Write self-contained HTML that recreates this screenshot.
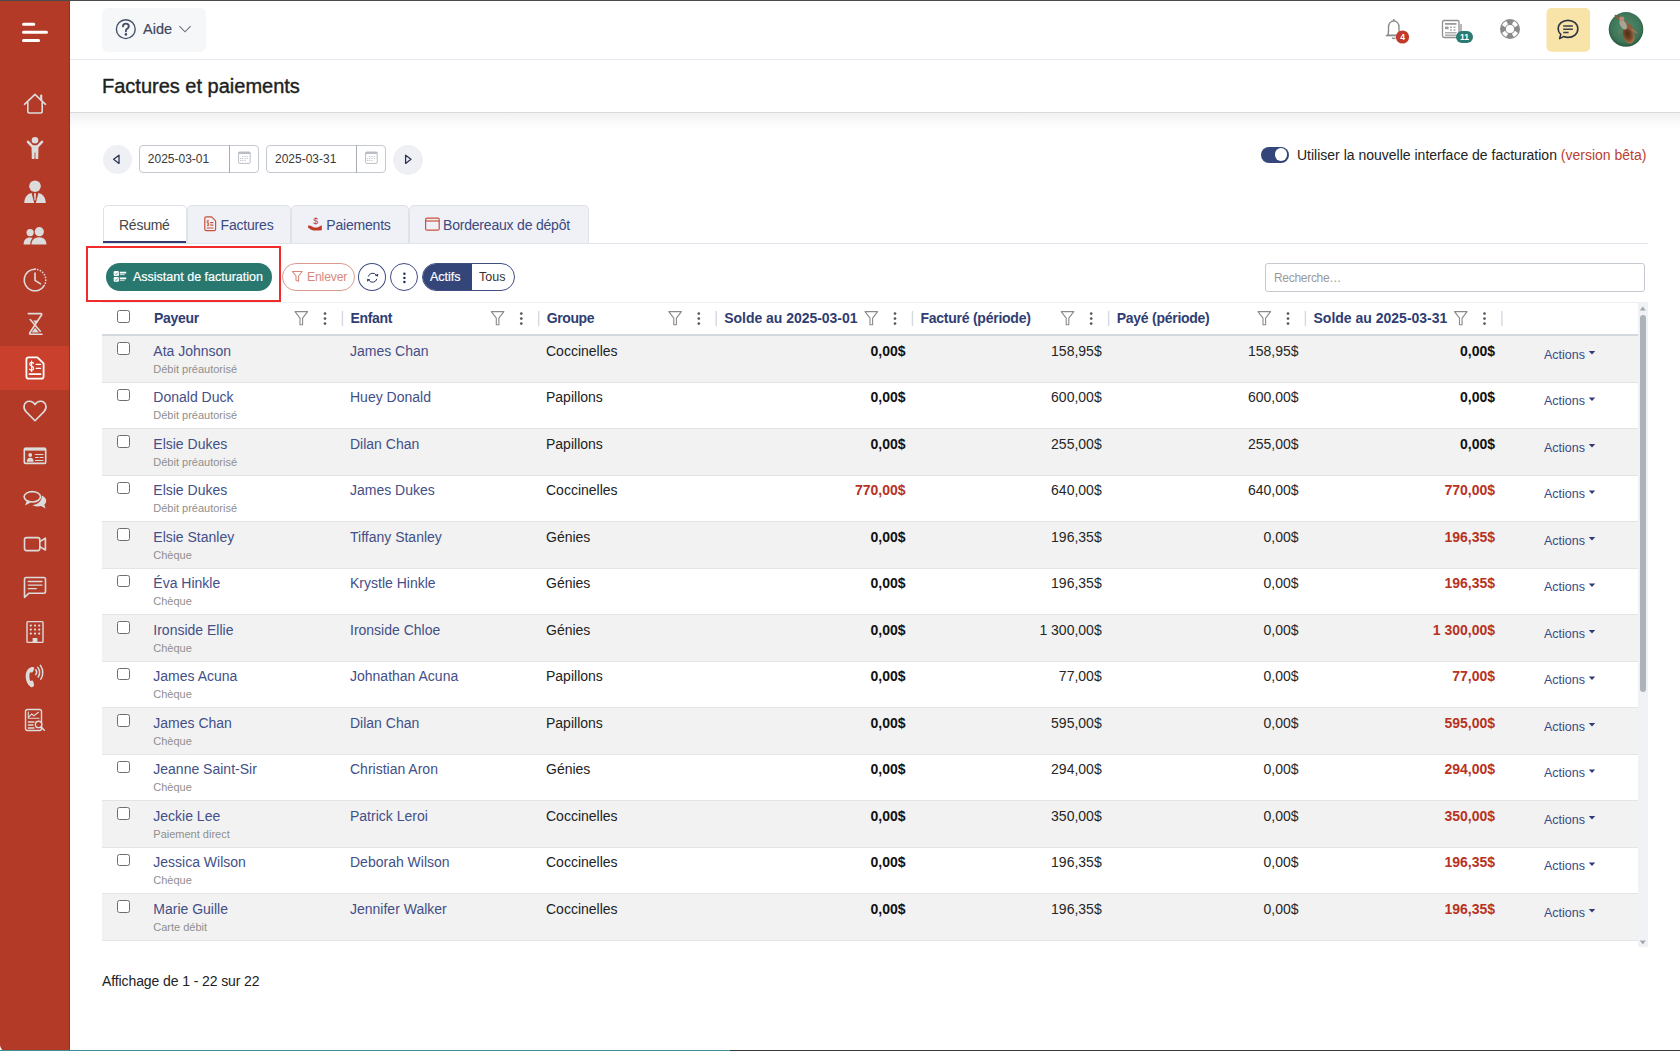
<!DOCTYPE html>
<html><head><meta charset="utf-8"><title>Factures et paiements</title>
<style>
*{box-sizing:border-box;margin:0;padding:0}
html,body{width:1680px;height:1051px;overflow:hidden;background:#fff;font-family:"Liberation Sans",sans-serif;color:#222}
.a{position:absolute}
.nw{white-space:nowrap;line-height:1.15}
svg.a{overflow:visible}
#topline{left:0;top:0;width:1680px;height:1px;background:#4a4a4a;z-index:50}
#botline{left:0;top:1050px;width:1680px;height:1px;background:linear-gradient(90deg,#3f8e98 0,#3f8e98 730px,#3a3a3a 730px);z-index:50}
#side{left:0;top:0;width:70px;height:1051px;background:#b33a27;border-bottom-left-radius:6px}
#hdr{left:70px;top:0;width:1610px;height:60px;background:#fff;border-bottom:1px solid #e6e8ef}
#aide{left:102px;top:8px;width:104px;height:44px;background:#f6f7f9;border-radius:6px}
#titlebar{left:70px;top:60px;width:1610px;height:53px;background:#fff;border-bottom:1px solid #dadbdd}
#shadow{left:70px;top:113px;width:1610px;height:17px;background:linear-gradient(#f1f1f1,#fbfbfb 60%,#fff)}
.title{left:102px;font-size:20px;color:#1d1f23;-webkit-text-stroke:0.4px #1d1f23}
.circ{border-radius:50%;background:#eef0f5}
.dinput{height:28px;border:1px solid #c5c9d0;border-radius:4px;background:#fff}
.dtext{font-size:12px;color:#383838}
.tab{top:205px;height:38px;background:#eff1f6;border:1px solid #dfe2e9;border-bottom:none;border-radius:5px 5px 0 0}
.tabt{font-size:14px;color:#3b4a80;top:217px}
.hcell{font-size:14px;font-weight:bold;color:#2f3d73}
.cell{font-size:14px}
.name{color:#434f87}
.sub{font-size:11px;color:#8f8f8f}
.num{text-align:right;width:200px}
.cb{width:12.6px;height:12.6px;border:1.4px solid #6e6e6e;border-radius:2.5px;background:#fff}
.act{font-size:12.5px;color:#3a4a84}
</style></head>
<body>
<div id="topline" class="a"></div>
<div id="botline" class="a"></div>
<div id="side" class="a">
<div class="a" style="left:0;top:346px;width:70px;height:44px;background:#c9402c"></div>
<div class="a" style="left:69.2px;top:0;width:0.8px;height:1051px;background:#b8240f"></div>
<svg class="a" style="left:0;top:0" width="70" height="1051" viewBox="0 0 70 1051"><g stroke="#fff" stroke-width="3" stroke-linecap="round"><path d="M23.5 24.3H33.8M23.5 32.3H46.5M23.5 40.4H38.6"/></g><g fill="none" stroke="#dcdcdc" stroke-width="1.6" stroke-linecap="round" stroke-linejoin="round"><path d="M24.5 104.3L35 94.3L45.5 104.3"/><path d="M27.8 102.5V111.3Q27.8 113 29.5 113H40.5Q42.2 113 42.2 111.3V102.5"/><path d="M41.2 95.5V100" stroke-width="2.2"/><path d="M35 269.2A10.8 10.8 0 1 0 44.35 285.4"/><path d="M35 269.2A10.8 10.8 0 0 1 44.35 285.4" stroke-dasharray="0.1 2.7" stroke-width="1.7"/><path d="M35 273V280.3L40.5 283.8"/><path d="M28.3 313.6H40.8Q42.3 313.6 41.5 315L30 332.5Q29 334.2 30.5 334.2H42"/><path d="M30.2 319.5L40.3 331.2"/><path d="M35 420.8L26 411.6C22.3 407.8 24 401.6 29.2 401.3C32 401.1 33.9 402.8 35 404.6C36.1 402.8 38 401.1 40.8 401.3C46 401.6 47.7 407.8 44 411.6Z"/><rect x="24.3" y="448.2" width="21.4" height="15.2" rx="1.2"/><path d="M35.5 454.5H43M35.5 457.5H38.3M40 457.5H43M35.5 460.5H43" stroke-width="1.1"/><ellipse cx="32.3" cy="496.8" rx="8.2" ry="5.2"/><rect x="24.5" y="537.6" width="15.3" height="13" rx="2"/><path d="M39.8 541.6L45.4 538.2V550L39.8 546.6"/><path d="M24.5 597.3V579.2Q24.5 577.5 26.2 577.5H43.8Q45.5 577.5 45.5 579.2V591.5Q45.5 593.2 43.8 593.2H29Z"/><path d="M28.3 581.5H42M28.3 585.1H42M28.3 588.7H36.3" stroke-width="1.3"/><rect x="27" y="621.6" width="16" height="20.8" rx="0.8" stroke-width="1.4"/><path d="M35.8 669.8Q37.6 672.2 35.8 674.6M37.8 667.4Q41.3 672.2 38.2 677M40.4 665.3Q45 672.2 40.8 679.2" stroke-width="1.5"/><rect x="25.5" y="709.5" width="16" height="21" rx="2" stroke-width="1.4"/><path d="M28.3 712V718.3H39" stroke-width="1.1"/><path d="M28.8 716.8L31.8 713.8L33.8 715.8L38.5 712.3" stroke-width="1.1"/><path d="M28.3 722H34M28.3 725H33M28.3 728H34" stroke-width="1.3"/></g><circle cx="38.6" cy="724.4" r="3.2" fill="#b33a27" stroke="#dcdcdc" stroke-width="1.4"/><path d="M40.9 726.7L44.3 730.2" stroke="#dcdcdc" stroke-width="1.6" stroke-linecap="round"/><g fill="#dcdcdc"><circle cx="35" cy="140.2" r="3.3"/><path d="M28 141.8L32.3 146.3M42 141.8L37.7 146.3" stroke="#dcdcdc" stroke-width="2.6" stroke-linecap="round"/><path d="M31.6 145.2H38.4V152.5H38.3V158.2Q38.3 159 37.5 159H36.1Q35.4 159 35.4 158.2V152.5H34.6V158.2Q34.6 159 33.9 159H32.5Q31.7 159 31.7 158.2V152.5H31.6Z"/><circle cx="35" cy="186.2" r="5.8"/><path d="M24.2 203C24.4 197.2 27.3 193.6 31.6 192.9L34.2 203Z"/><path d="M45.8 203C45.6 197.2 42.7 193.6 38.4 192.9L35.8 203Z"/><path d="M34 193.2H36L35.6 199.5L35 201L34.4 199.5Z"/><circle cx="30.1" cy="232.6" r="3.6"/><circle cx="39.3" cy="231.7" r="4.6"/><path d="M23.6 244.6C23.6 240.2 26.2 237.6 30.1 237.6C31.2 237.6 32 237.8 32.7 238.1C31 239.8 30.2 242 30.2 244.6Z"/><path d="M31.4 244.6C31.4 240.2 34.5 237.2 39.2 237.2C43.9 237.2 46.4 240.2 46.4 244.6Z"/><path d="M31.6 332.6L35.2 327.8L38.8 332.6Z"/><path d="M33.2 320.5H37.8L35.5 323.5Z"/><rect x="24.3" y="447.8" width="21.4" height="2.8"/><circle cx="30.2" cy="455" r="1.9"/><path d="M26.8 461.7Q26.8 457.8 30.2 457.8Q33.6 457.8 33.6 461.7Z"/><path d="M26.8 501L25 505.5L30.6 502.4Z"/><path d="M41.8 495.5C46 497 48 501.8 44.3 504.8L45.6 508.6L41 506C38.3 506.8 35 506.4 32.4 505.2C37.3 504.6 42 501.8 41.8 495.5Z"/><circle cx="30.8" cy="625.6" r="1.15"/><circle cx="35" cy="625.6" r="1.15"/><circle cx="39.2" cy="625.6" r="1.15"/><circle cx="30.8" cy="629.6" r="1.15"/><circle cx="35" cy="629.6" r="1.15"/><circle cx="39.2" cy="629.6" r="1.15"/><circle cx="30.8" cy="633.6" r="1.15"/><circle cx="35" cy="633.6" r="1.15"/><circle cx="39.2" cy="633.6" r="1.15"/><rect x="32.6" y="638" width="4.8" height="4.4"/><path d="M31.2 667.2C27.8 668.2 25.7 671.6 25.7 676.2C25.7 681.2 28.2 685.6 31.4 687.2C32.3 687.5 33.6 686.6 34 685.5C34.3 684.6 33.4 681.6 32.7 680.8C32.2 680.3 30.9 680.7 30.2 681C29.2 678.8 29.1 674.4 30 672.2C30.7 672.4 31.9 672.6 32.4 672.2C33.2 671.5 34.3 669 34.2 668C34.1 667.2 32.2 666.9 31.2 667.2Z"/></g><g fill="none" stroke="#fff" stroke-width="1.8" stroke-linejoin="round" stroke-linecap="round"><path d="M28.6 357.4H37.4L43.6 363.4V376.4Q43.6 378.6 41.4 378.6H28.6Q26.4 378.6 26.4 376.4V359.6Q26.4 357.4 28.6 357.4Z"/><path d="M36.2 364.4H40.6M36.2 368.3H40.6" stroke-width="1.3"/><path d="M29.4 374.1H40.6" stroke-width="1.8"/><path d="M33.5 363.3Q33 362.4 31.6 362.4Q29.8 362.4 29.8 364Q29.8 365.5 31.6 366.1Q33.6 366.7 33.6 368.5Q33.6 370.2 31.6 370.2Q30.1 370.2 29.6 369.2M31.6 361.2V371.4" stroke-width="1.2"/></g></svg>
</div>
<div id="hdr" class="a"></div>
<div id="aide" class="a"></div>
<svg class="a" style="left:110px;top:14px" width="100" height="32" viewBox="110 14 100 32"><circle cx="125.8" cy="29.2" r="9.4" fill="none" stroke="#44506a" stroke-width="1.4"/><path d="M123 26.4Q123 23.6 125.9 23.6Q128.8 23.6 128.8 26.3Q128.8 27.9 127 28.9Q125.9 29.5 125.9 30.9V31.4" fill="none" stroke="#44506a" stroke-width="1.9" stroke-linecap="round"/><circle cx="125.9" cy="34.4" r="1.3" fill="#44506a"/><path d="M179.4 26.2L185 31.8L190.6 26.2" fill="none" stroke="#6a7080" stroke-width="1.1"/></svg>
<div class="a nw" style="left:143px;top:20.5px;font-size:14.5px;color:#3d4860;-webkit-text-stroke:0.2px #3d4860">Aide</div>
<svg class="a" style="left:1370px;top:0" width="310" height="60" viewBox="1370 0 310 60"><g fill="none" stroke="#8a8a8a" stroke-width="1.4" stroke-linejoin="round"><path d="M1387.6 35.2C1388.8 33.6 1388.5 31 1388.5 27.5C1388.5 23.6 1390.8 21 1393.8 21C1396.8 21 1399 23.6 1399 27.5C1399 31 1398.8 33.6 1400 35.2Z"/><path d="M1385.8 35.6H1401.6"/><path d="M1392 37.8Q1393.8 39.2 1395.6 37.8"/></g><circle cx="1393.8" cy="20" r="1" fill="#8a8a8a"/><circle cx="1402.5" cy="37" r="6.6" fill="#c0392b"/><text x="1402.5" y="40" font-family="Liberation Sans" font-weight="bold" font-size="8.5" fill="#fff" text-anchor="middle">4</text><g fill="none" stroke="#8f8f8f" stroke-width="1.3"><rect x="1442.5" y="20.5" width="16.5" height="17" rx="1.8"/><path d="M1461 24V36"/></g><g fill="#9a9a9a"><rect x="1445" y="23" width="11.5" height="1.8"/><rect x="1445" y="26.6" width="3.6" height="2.6"/><rect x="1450" y="26.6" width="2" height="1.2"/><rect x="1453.5" y="26.6" width="2" height="1.2"/><rect x="1450" y="29.4" width="2" height="1.2"/><rect x="1453.5" y="29.4" width="2" height="1.2"/><rect x="1445" y="32.2" width="11.5" height="1.2"/><rect x="1445" y="34.6" width="11.5" height="1.2"/></g><rect x="1456" y="31" width="17" height="12" rx="6" fill="#2a7b72"/><text x="1464.5" y="40.2" font-family="Liberation Sans" font-weight="bold" font-size="8.5" fill="#fff" text-anchor="middle">11</text><circle cx="1510.0" cy="29.0" r="10" fill="#8a8a8a"/><circle cx="1510.0" cy="29.0" r="4.1" fill="#fff"/><path d="M1514.85 30.86A5.2 5.2 0 0 1 1511.86 33.85L1513.90 37.00A8.9 8.9 0 0 0 1518.00 32.90Z" fill="#fff"/><path d="M1508.14 33.85A5.2 5.2 0 0 1 1505.15 30.86L1502.00 32.90A8.9 8.9 0 0 0 1506.10 37.00Z" fill="#fff"/><path d="M1505.15 27.14A5.2 5.2 0 0 1 1508.14 24.15L1506.10 21.00A8.9 8.9 0 0 0 1502.00 25.10Z" fill="#fff"/><path d="M1511.86 24.15A5.2 5.2 0 0 1 1514.85 27.14L1518.00 25.10A8.9 8.9 0 0 0 1513.90 21.00Z" fill="#fff"/><rect x="1546.5" y="8" width="43.6" height="43.8" rx="5" fill="#f8e4a8"/><path d="M1559.6 38.6L1560.8 34.4C1558.9 32.8 1558.2 31 1558.2 28.9C1558.2 23.8 1562.6 20.4 1568 20.4C1573.4 20.4 1577.8 23.8 1577.8 28.9C1577.8 34 1573.4 37.4 1568 37.4C1566.2 37.4 1564.8 37.1 1563.6 36.6Z" fill="none" stroke="#2f3442" stroke-width="1.6" stroke-linejoin="round"/><path d="M1563.2 26H1572.8M1563.2 29.2H1572.8M1563.2 32.4H1568.6" stroke="#3a3f4c" stroke-width="1.5"/><defs><radialGradient id="av" cx="0.5" cy="0.45" r="0.55"><stop offset="0" stop-color="#4f8a6a"/><stop offset="0.75" stop-color="#3f765a"/><stop offset="1" stop-color="#2a5a40"/></radialGradient><radialGradient id="tl" cx="0.45" cy="0.4" r="0.6"><stop offset="0" stop-color="#4a2c18"/><stop offset="0.6" stop-color="#7a4a2a"/><stop offset="1" stop-color="#b07845"/></radialGradient></defs><circle cx="1626" cy="29.4" r="17.3" fill="url(#av)"/><ellipse cx="1628.6" cy="35.2" rx="5.6" ry="8.6" transform="rotate(-18 1628.6 35.2)" fill="url(#tl)"/><path d="M1622 21L1615.6 15.8" stroke="#8a5a3a" stroke-width="2.2" stroke-linecap="round"/><path d="M1625.5 24L1627.6 20" stroke="#8a6040" stroke-width="1.6" stroke-linecap="round"/><ellipse cx="1629.4" cy="26.8" rx="2.4" ry="4" transform="rotate(-50 1629.4 26.8)" fill="#8a5d3c"/><path d="M1632 29.5L1636.4 32.6" stroke="#a07658" stroke-width="1.6" stroke-linecap="round"/><ellipse cx="1623.2" cy="24.6" rx="3" ry="5.4" transform="rotate(-32 1623.2 24.6)" fill="#a8a394"/><ellipse cx="1621.8" cy="18.8" rx="2.6" ry="2.3" fill="#b88a74"/><path d="M1620 31L1619.2 34.2" stroke="#9a6a48" stroke-width="1.4" stroke-linecap="round"/></svg>
<div id="titlebar" class="a"></div>
<div id="shadow" class="a"></div>
<div class="a nw title" style="top:74.6px">Factures et paiements</div>
<div class="a circ" style="left:102.5px;top:144.8px;width:29.4px;height:29.4px"></div>
<div class="a circ" style="left:393px;top:144.6px;width:30px;height:30px"></div>
<svg class="a" style="left:100px;top:140px" width="330" height="40" viewBox="100 140 330 40"><path d="M119 155.2V163.4L113.6 159.3Z" fill="none" stroke="#2c3550" stroke-width="1.3" stroke-linejoin="round"/><path d="M405.6 155.2V163.4L411 159.3Z" fill="none" stroke="#2c3550" stroke-width="1.3" stroke-linejoin="round"/></svg>
<div class="a dinput" style="left:139px;top:145px;width:119.5px"></div>
<div class="a" style="left:229px;top:145px;width:1px;height:28px;background:#a8adb5"></div>
<div class="a nw dtext" style="left:147.8px;top:152.5px">2025-03-01</div>
<svg class="a" style="left:238px;top:151px" width="13" height="13" viewBox="0 0 13 13"><rect x="0.6" y="1" width="11.6" height="11.4" rx="1" fill="none" stroke="#b9bdc5" stroke-width="1"/><rect x="0.6" y="1" width="11.6" height="2" fill="#b9bdc5"/><g fill="#c4c8cf"><rect x="4" y="5" width="1.3" height="1"/><rect x="6.3" y="5" width="1.3" height="1"/><rect x="8.6" y="5" width="1.3" height="1"/><rect x="2" y="7" width="1.3" height="1"/><rect x="4" y="7" width="1.3" height="1"/><rect x="6.3" y="7" width="1.3" height="1"/><rect x="8.6" y="7" width="1.3" height="1"/><rect x="2" y="9" width="1.3" height="1"/><rect x="4" y="9" width="1.3" height="1"/><rect x="6.3" y="9" width="1.3" height="1"/></g></svg>
<div class="a dinput" style="left:266.2px;top:145px;width:119.5px"></div>
<div class="a" style="left:356.2px;top:145px;width:1px;height:28px;background:#a8adb5"></div>
<div class="a nw dtext" style="left:275.0px;top:152.5px">2025-03-31</div>
<svg class="a" style="left:365.2px;top:151px" width="13" height="13" viewBox="0 0 13 13"><rect x="0.6" y="1" width="11.6" height="11.4" rx="1" fill="none" stroke="#b9bdc5" stroke-width="1"/><rect x="0.6" y="1" width="11.6" height="2" fill="#b9bdc5"/><g fill="#c4c8cf"><rect x="4" y="5" width="1.3" height="1"/><rect x="6.3" y="5" width="1.3" height="1"/><rect x="8.6" y="5" width="1.3" height="1"/><rect x="2" y="7" width="1.3" height="1"/><rect x="4" y="7" width="1.3" height="1"/><rect x="6.3" y="7" width="1.3" height="1"/><rect x="8.6" y="7" width="1.3" height="1"/><rect x="2" y="9" width="1.3" height="1"/><rect x="4" y="9" width="1.3" height="1"/><rect x="6.3" y="9" width="1.3" height="1"/></g></svg>
<div class="a" style="left:1261px;top:147px;width:28px;height:16px;border-radius:8px;background:#34467a"></div>
<div class="a" style="left:1275px;top:148.4px;width:12.4px;height:12.4px;border-radius:50%;background:#fff"></div>
<div class="a nw" style="left:1297px;top:146.5px;font-size:14px;color:#222">Utiliser la nouvelle interface de facturation <span style="color:#b9412f">(version bêta)</span></div>
<div class="a" style="left:102px;top:243px;width:1546px;height:1px;background:#e1e4eb"></div>
<div class="a tab" style="left:102.5px;width:84px;background:#fff"></div>
<div class="a nw tabt" style="left:119px;color:#454545;letter-spacing:-0.25px">Résumé</div>
<div class="a" style="left:102.5px;top:240.5px;width:83.5px;height:2.5px;background:#2f3d73"></div>
<div class="a tab" style="left:186.5px;width:104.5px"></div>
<div class="a tab" style="left:291px;width:117.5px"></div>
<div class="a tab" style="left:408.5px;width:180.5px"></div>
<div class="a nw tabt" style="left:220.6px;letter-spacing:-0.2px">Factures</div>
<div class="a nw tabt" style="left:326.3px;letter-spacing:-0.2px">Paiements</div>
<div class="a nw tabt" style="left:443px;letter-spacing:-0.2px">Bordereaux de dépôt</div>
<svg class="a" style="left:200px;top:212px" width="250" height="24" viewBox="200 212 250 24"><g fill="none" stroke="#c8513e" stroke-width="1.2" stroke-linejoin="round"><path d="M206.2 216.8H211.6L215.6 220.8V229.2Q215.6 230.6 214.2 230.6H206.2Q204.8 230.6 204.8 229.2V218.2Q204.8 216.8 206.2 216.8Z"/><path d="M210.2 222.6H213.4M210.2 225.2H213.4M206.8 228H213.6"/><path d="M208.4 220.6Q207 220.6 207 221.8Q207 222.8 208 223.1Q208.9 223.4 208.9 224.4Q208.9 225.6 207.2 225.6M208 219.8V226.4" stroke-width="0.9"/><rect x="425.6" y="218.2" width="13.6" height="12" rx="1.5"/><path d="M425.6 221H439.2"/></g><text x="315.8" y="223.5" font-family="Liberation Sans" font-size="9" fill="#c0392b" text-anchor="middle">$</text><path d="M308 225.8Q309.5 224.8 311.5 226.2L314 227.6H317.5L321.8 225.3V230.2L318.5 230.6H313.5Q310.5 230 308 227.6Z" fill="#c0392b"/></svg>
<div class="a" style="left:86.3px;top:245.5px;width:195px;height:56.5px;border:2px solid #f02b2b"></div>
<div class="a" style="left:105.5px;top:263px;width:166.5px;height:28px;border-radius:14px;background:#287870"></div>
<svg class="a" style="left:112px;top:269px" width="16" height="15" viewBox="112 269 16 15"><g fill="#fff"><rect x="113.7" y="271.1" width="5.2" height="4.8" rx="1.2"/><rect x="113.7" y="277" width="5.2" height="4.8" rx="1.2"/></g><path d="M114.9 273.6L115.9 274.6L117.6 272.6M114.9 279.5L115.9 280.5L117.6 278.5" fill="none" stroke="#287870" stroke-width="0.7"/><g stroke="#fff" stroke-width="1.8"><path d="M119.8 272.7H126.2M119.8 278.4H126.2"/></g><g stroke="#cfe3df" stroke-width="1"><path d="M119.8 274.6H124.6M119.8 280.3H124.6"/></g></svg>
<div class="a nw" style="left:133px;top:270.3px;font-size:12.5px;color:#fff;-webkit-text-stroke:0.2px #fff">Assistant de facturation</div>
<div class="a" style="left:282.4px;top:263.2px;width:72.6px;height:27.5px;border-radius:14px;border:1px solid #dc9a8e"></div>
<svg class="a" style="left:290px;top:269px" width="15" height="15" viewBox="290 269 15 15"><path d="M292.4 271.5H302.2L298.6 276V281.2L296 280.2V276Z" fill="none" stroke="#d6897b" stroke-width="1.1" stroke-linejoin="round"/></svg>
<div class="a nw" style="left:307px;top:270.3px;font-size:12.2px;color:#d6897b;letter-spacing:-0.15px">Enlever</div>
<div class="a" style="left:358px;top:263.2px;width:28.3px;height:28px;border-radius:50%;border:1.2px solid #3f4d80"></div>
<div class="a" style="left:390.3px;top:263.2px;width:28px;height:28px;border-radius:50%;border:1.2px solid #3f4d80"></div>
<svg class="a" style="left:360px;top:265px" width="60" height="26" viewBox="360 265 60 26"><path d="M368.3 276.6A4.5 4.5 0 0 1 376.4 275.2M376.9 278.8A4.5 4.5 0 0 1 368.8 280.2" fill="none" stroke="#2e3a6a" stroke-width="1"/><path d="M374.8 275.8L378 276.6L378.2 273.6Z M370.4 279.6L367.2 278.8L367 281.8Z" fill="#2e3a6a"/><g fill="#1f2a5a"><circle cx="404.4" cy="273.8" r="1.2"/><circle cx="404.4" cy="277.9" r="1.2"/><circle cx="404.4" cy="282" r="1.2"/></g></svg>
<div class="a" style="left:421.6px;top:263.2px;width:93px;height:28px;border-radius:14px;border:1.2px solid #3f4d80;overflow:hidden"><div style="width:49.4px;height:28px;background:#34457a"></div></div>
<div class="a nw" style="left:430px;top:270.3px;font-size:12.5px;color:#fff;-webkit-text-stroke:0.2px #fff">Actifs</div>
<div class="a nw" style="left:479px;top:270.3px;font-size:12.5px;color:#333">Tous</div>
<div class="a" style="left:1265px;top:263px;width:380px;height:28.6px;border:1px solid #c5c9d0;border-radius:3px"></div>
<div class="a nw" style="left:1274px;top:271.5px;font-size:12px;color:#9a9a9a;letter-spacing:-0.3px">Recherche…</div>
<div class="a" style="left:102px;top:302px;width:1536px;height:1px;background:#eceef2"></div>
<div class="a" style="left:102px;top:334px;width:1536px;height:2px;background:#d3d7de"></div>
<div class="a cb" style="left:117.2px;top:310px"></div>
<div class="a nw hcell" style="left:154.0px;top:310px;letter-spacing:-0.3px">Payeur</div>
<div class="a nw hcell" style="left:350.5px;top:310px;letter-spacing:-0.35px">Enfant</div>
<div class="a nw hcell" style="left:546.8px;top:310px;letter-spacing:-0.43px">Groupe</div>
<div class="a nw hcell" style="left:724.3px;top:310px;letter-spacing:-0.04px">Solde au 2025-03-01</div>
<div class="a nw hcell" style="left:920.5px;top:310px;letter-spacing:-0.25px">Facturé (période)</div>
<div class="a nw hcell" style="left:1116.7px;top:310px;letter-spacing:-0.26px">Payé (période)</div>
<div class="a nw hcell" style="left:1313.5px;top:310px;letter-spacing:0px">Solde au 2025-03-31</div>
<svg class="a" style="left:100px;top:305px" width="1420" height="26" viewBox="100 305 1420 26"><path d="M295.0 311.6H307.6L302.6 318.2V324.8L300.0 324.8V318.2Z" fill="none" stroke="#8a8a8a" stroke-width="1.1" stroke-linejoin="round"/><g fill="#5a5a5a"><circle cx="325.0" cy="313.6" r="1.35"/><circle cx="325.0" cy="318.6" r="1.35"/><circle cx="325.0" cy="323.6" r="1.35"/></g><rect x="341.7" y="311" width="1.4" height="15" fill="#d5d9e0"/><path d="M491.3 311.6H503.9L498.9 318.2V324.8L496.3 324.8V318.2Z" fill="none" stroke="#8a8a8a" stroke-width="1.1" stroke-linejoin="round"/><g fill="#5a5a5a"><circle cx="521.3" cy="313.6" r="1.35"/><circle cx="521.3" cy="318.6" r="1.35"/><circle cx="521.3" cy="323.6" r="1.35"/></g><rect x="538.0" y="311" width="1.4" height="15" fill="#d5d9e0"/><path d="M668.8 311.6H681.4L676.4 318.2V324.8L673.8 324.8V318.2Z" fill="none" stroke="#8a8a8a" stroke-width="1.1" stroke-linejoin="round"/><g fill="#5a5a5a"><circle cx="698.8" cy="313.6" r="1.35"/><circle cx="698.8" cy="318.6" r="1.35"/><circle cx="698.8" cy="323.6" r="1.35"/></g><rect x="715.5" y="311" width="1.4" height="15" fill="#d5d9e0"/><path d="M865.0 311.6H877.6L872.6 318.2V324.8L870.0 324.8V318.2Z" fill="none" stroke="#8a8a8a" stroke-width="1.1" stroke-linejoin="round"/><g fill="#5a5a5a"><circle cx="895.0" cy="313.6" r="1.35"/><circle cx="895.0" cy="318.6" r="1.35"/><circle cx="895.0" cy="323.6" r="1.35"/></g><rect x="911.7" y="311" width="1.4" height="15" fill="#d5d9e0"/><path d="M1061.2 311.6H1073.8L1068.8 318.2V324.8L1066.2 324.8V318.2Z" fill="none" stroke="#8a8a8a" stroke-width="1.1" stroke-linejoin="round"/><g fill="#5a5a5a"><circle cx="1091.2" cy="313.6" r="1.35"/><circle cx="1091.2" cy="318.6" r="1.35"/><circle cx="1091.2" cy="323.6" r="1.35"/></g><rect x="1107.9" y="311" width="1.4" height="15" fill="#d5d9e0"/><path d="M1258.0 311.6H1270.6L1265.6 318.2V324.8L1263.0 324.8V318.2Z" fill="none" stroke="#8a8a8a" stroke-width="1.1" stroke-linejoin="round"/><g fill="#5a5a5a"><circle cx="1288.0" cy="313.6" r="1.35"/><circle cx="1288.0" cy="318.6" r="1.35"/><circle cx="1288.0" cy="323.6" r="1.35"/></g><rect x="1304.7" y="311" width="1.4" height="15" fill="#d5d9e0"/><path d="M1454.5 311.6H1467.1L1462.1 318.2V324.8L1459.5 324.8V318.2Z" fill="none" stroke="#8a8a8a" stroke-width="1.1" stroke-linejoin="round"/><g fill="#5a5a5a"><circle cx="1484.5" cy="313.6" r="1.35"/><circle cx="1484.5" cy="318.6" r="1.35"/><circle cx="1484.5" cy="323.6" r="1.35"/></g><rect x="1501.2" y="311" width="1.4" height="15" fill="#d5d9e0"/></svg>
<div class="a" style="left:102px;top:336.0px;width:1536px;height:46.5px;background:#f2f2f2;border-bottom:1px solid #e2e4e8"></div>
<div class="a cb" style="left:117.3px;top:342.2px"></div>
<div class="a nw cell name" style="left:153.3px;top:342.7px">Ata Johnson</div>
<div class="a nw sub" style="left:153.3px;top:362.6px">Débit préautorisé</div>
<div class="a nw cell name" style="left:350px;top:342.7px">James Chan</div>
<div class="a nw cell" style="left:546px;top:342.7px;color:#222">Coccinelles</div>
<div class="a nw cell num" style="left:705.5px;top:342.7px;font-weight:bold;color:#111">0,00$</div>
<div class="a nw cell num" style="left:901.7px;top:342.7px;color:#262626">158,95$</div>
<div class="a nw cell num" style="left:1098.5px;top:342.7px;color:#262626">158,95$</div>
<div class="a nw cell num" style="left:1295.0px;top:342.7px;font-weight:bold;color:#111">0,00$</div>
<div class="a nw act" style="left:1544px;top:347.6px">Actions</div>
<div class="a" style="left:102px;top:382.5px;width:1536px;height:46.5px;background:#fff;border-bottom:1px solid #e2e4e8"></div>
<div class="a cb" style="left:117.3px;top:388.7px"></div>
<div class="a nw cell name" style="left:153.3px;top:389.2px">Donald Duck</div>
<div class="a nw sub" style="left:153.3px;top:409.1px">Débit préautorisé</div>
<div class="a nw cell name" style="left:350px;top:389.2px">Huey Donald</div>
<div class="a nw cell" style="left:546px;top:389.2px;color:#222">Papillons</div>
<div class="a nw cell num" style="left:705.5px;top:389.2px;font-weight:bold;color:#111">0,00$</div>
<div class="a nw cell num" style="left:901.7px;top:389.2px;color:#262626">600,00$</div>
<div class="a nw cell num" style="left:1098.5px;top:389.2px;color:#262626">600,00$</div>
<div class="a nw cell num" style="left:1295.0px;top:389.2px;font-weight:bold;color:#111">0,00$</div>
<div class="a nw act" style="left:1544px;top:394.1px">Actions</div>
<div class="a" style="left:102px;top:429.0px;width:1536px;height:46.5px;background:#f2f2f2;border-bottom:1px solid #e2e4e8"></div>
<div class="a cb" style="left:117.3px;top:435.2px"></div>
<div class="a nw cell name" style="left:153.3px;top:435.7px">Elsie Dukes</div>
<div class="a nw sub" style="left:153.3px;top:455.6px">Débit préautorisé</div>
<div class="a nw cell name" style="left:350px;top:435.7px">Dilan Chan</div>
<div class="a nw cell" style="left:546px;top:435.7px;color:#222">Papillons</div>
<div class="a nw cell num" style="left:705.5px;top:435.7px;font-weight:bold;color:#111">0,00$</div>
<div class="a nw cell num" style="left:901.7px;top:435.7px;color:#262626">255,00$</div>
<div class="a nw cell num" style="left:1098.5px;top:435.7px;color:#262626">255,00$</div>
<div class="a nw cell num" style="left:1295.0px;top:435.7px;font-weight:bold;color:#111">0,00$</div>
<div class="a nw act" style="left:1544px;top:440.6px">Actions</div>
<div class="a" style="left:102px;top:475.5px;width:1536px;height:46.5px;background:#fff;border-bottom:1px solid #e2e4e8"></div>
<div class="a cb" style="left:117.3px;top:481.7px"></div>
<div class="a nw cell name" style="left:153.3px;top:482.2px">Elsie Dukes</div>
<div class="a nw sub" style="left:153.3px;top:502.1px">Débit préautorisé</div>
<div class="a nw cell name" style="left:350px;top:482.2px">James Dukes</div>
<div class="a nw cell" style="left:546px;top:482.2px;color:#222">Coccinelles</div>
<div class="a nw cell num" style="left:705.5px;top:482.2px;font-weight:bold;color:#b7321f">770,00$</div>
<div class="a nw cell num" style="left:901.7px;top:482.2px;color:#262626">640,00$</div>
<div class="a nw cell num" style="left:1098.5px;top:482.2px;color:#262626">640,00$</div>
<div class="a nw cell num" style="left:1295.0px;top:482.2px;font-weight:bold;color:#b7321f">770,00$</div>
<div class="a nw act" style="left:1544px;top:487.1px">Actions</div>
<div class="a" style="left:102px;top:522.0px;width:1536px;height:46.5px;background:#f2f2f2;border-bottom:1px solid #e2e4e8"></div>
<div class="a cb" style="left:117.3px;top:528.2px"></div>
<div class="a nw cell name" style="left:153.3px;top:528.7px">Elsie Stanley</div>
<div class="a nw sub" style="left:153.3px;top:548.6px">Chèque</div>
<div class="a nw cell name" style="left:350px;top:528.7px">Tiffany Stanley</div>
<div class="a nw cell" style="left:546px;top:528.7px;color:#222">Génies</div>
<div class="a nw cell num" style="left:705.5px;top:528.7px;font-weight:bold;color:#111">0,00$</div>
<div class="a nw cell num" style="left:901.7px;top:528.7px;color:#262626">196,35$</div>
<div class="a nw cell num" style="left:1098.5px;top:528.7px;color:#262626">0,00$</div>
<div class="a nw cell num" style="left:1295.0px;top:528.7px;font-weight:bold;color:#b7321f">196,35$</div>
<div class="a nw act" style="left:1544px;top:533.6px">Actions</div>
<div class="a" style="left:102px;top:568.5px;width:1536px;height:46.5px;background:#fff;border-bottom:1px solid #e2e4e8"></div>
<div class="a cb" style="left:117.3px;top:574.7px"></div>
<div class="a nw cell name" style="left:153.3px;top:575.2px">Éva Hinkle</div>
<div class="a nw sub" style="left:153.3px;top:595.1px">Chèque</div>
<div class="a nw cell name" style="left:350px;top:575.2px">Krystle Hinkle</div>
<div class="a nw cell" style="left:546px;top:575.2px;color:#222">Génies</div>
<div class="a nw cell num" style="left:705.5px;top:575.2px;font-weight:bold;color:#111">0,00$</div>
<div class="a nw cell num" style="left:901.7px;top:575.2px;color:#262626">196,35$</div>
<div class="a nw cell num" style="left:1098.5px;top:575.2px;color:#262626">0,00$</div>
<div class="a nw cell num" style="left:1295.0px;top:575.2px;font-weight:bold;color:#b7321f">196,35$</div>
<div class="a nw act" style="left:1544px;top:580.1px">Actions</div>
<div class="a" style="left:102px;top:615.0px;width:1536px;height:46.5px;background:#f2f2f2;border-bottom:1px solid #e2e4e8"></div>
<div class="a cb" style="left:117.3px;top:621.2px"></div>
<div class="a nw cell name" style="left:153.3px;top:621.7px">Ironside Ellie</div>
<div class="a nw sub" style="left:153.3px;top:641.6px">Chèque</div>
<div class="a nw cell name" style="left:350px;top:621.7px">Ironside Chloe</div>
<div class="a nw cell" style="left:546px;top:621.7px;color:#222">Génies</div>
<div class="a nw cell num" style="left:705.5px;top:621.7px;font-weight:bold;color:#111">0,00$</div>
<div class="a nw cell num" style="left:901.7px;top:621.7px;color:#262626">1 300,00$</div>
<div class="a nw cell num" style="left:1098.5px;top:621.7px;color:#262626">0,00$</div>
<div class="a nw cell num" style="left:1295.0px;top:621.7px;font-weight:bold;color:#b7321f">1 300,00$</div>
<div class="a nw act" style="left:1544px;top:626.6px">Actions</div>
<div class="a" style="left:102px;top:661.5px;width:1536px;height:46.5px;background:#fff;border-bottom:1px solid #e2e4e8"></div>
<div class="a cb" style="left:117.3px;top:667.7px"></div>
<div class="a nw cell name" style="left:153.3px;top:668.2px">James Acuna</div>
<div class="a nw sub" style="left:153.3px;top:688.1px">Chèque</div>
<div class="a nw cell name" style="left:350px;top:668.2px">Johnathan Acuna</div>
<div class="a nw cell" style="left:546px;top:668.2px;color:#222">Papillons</div>
<div class="a nw cell num" style="left:705.5px;top:668.2px;font-weight:bold;color:#111">0,00$</div>
<div class="a nw cell num" style="left:901.7px;top:668.2px;color:#262626">77,00$</div>
<div class="a nw cell num" style="left:1098.5px;top:668.2px;color:#262626">0,00$</div>
<div class="a nw cell num" style="left:1295.0px;top:668.2px;font-weight:bold;color:#b7321f">77,00$</div>
<div class="a nw act" style="left:1544px;top:673.1px">Actions</div>
<div class="a" style="left:102px;top:708.0px;width:1536px;height:46.5px;background:#f2f2f2;border-bottom:1px solid #e2e4e8"></div>
<div class="a cb" style="left:117.3px;top:714.2px"></div>
<div class="a nw cell name" style="left:153.3px;top:714.7px">James Chan</div>
<div class="a nw sub" style="left:153.3px;top:734.6px">Chèque</div>
<div class="a nw cell name" style="left:350px;top:714.7px">Dilan Chan</div>
<div class="a nw cell" style="left:546px;top:714.7px;color:#222">Papillons</div>
<div class="a nw cell num" style="left:705.5px;top:714.7px;font-weight:bold;color:#111">0,00$</div>
<div class="a nw cell num" style="left:901.7px;top:714.7px;color:#262626">595,00$</div>
<div class="a nw cell num" style="left:1098.5px;top:714.7px;color:#262626">0,00$</div>
<div class="a nw cell num" style="left:1295.0px;top:714.7px;font-weight:bold;color:#b7321f">595,00$</div>
<div class="a nw act" style="left:1544px;top:719.6px">Actions</div>
<div class="a" style="left:102px;top:754.5px;width:1536px;height:46.5px;background:#fff;border-bottom:1px solid #e2e4e8"></div>
<div class="a cb" style="left:117.3px;top:760.7px"></div>
<div class="a nw cell name" style="left:153.3px;top:761.2px">Jeanne Saint-Sir</div>
<div class="a nw sub" style="left:153.3px;top:781.1px">Chèque</div>
<div class="a nw cell name" style="left:350px;top:761.2px">Christian Aron</div>
<div class="a nw cell" style="left:546px;top:761.2px;color:#222">Génies</div>
<div class="a nw cell num" style="left:705.5px;top:761.2px;font-weight:bold;color:#111">0,00$</div>
<div class="a nw cell num" style="left:901.7px;top:761.2px;color:#262626">294,00$</div>
<div class="a nw cell num" style="left:1098.5px;top:761.2px;color:#262626">0,00$</div>
<div class="a nw cell num" style="left:1295.0px;top:761.2px;font-weight:bold;color:#b7321f">294,00$</div>
<div class="a nw act" style="left:1544px;top:766.1px">Actions</div>
<div class="a" style="left:102px;top:801.0px;width:1536px;height:46.5px;background:#f2f2f2;border-bottom:1px solid #e2e4e8"></div>
<div class="a cb" style="left:117.3px;top:807.2px"></div>
<div class="a nw cell name" style="left:153.3px;top:807.7px">Jeckie Lee</div>
<div class="a nw sub" style="left:153.3px;top:827.6px">Paiement direct</div>
<div class="a nw cell name" style="left:350px;top:807.7px">Patrick Leroi</div>
<div class="a nw cell" style="left:546px;top:807.7px;color:#222">Coccinelles</div>
<div class="a nw cell num" style="left:705.5px;top:807.7px;font-weight:bold;color:#111">0,00$</div>
<div class="a nw cell num" style="left:901.7px;top:807.7px;color:#262626">350,00$</div>
<div class="a nw cell num" style="left:1098.5px;top:807.7px;color:#262626">0,00$</div>
<div class="a nw cell num" style="left:1295.0px;top:807.7px;font-weight:bold;color:#b7321f">350,00$</div>
<div class="a nw act" style="left:1544px;top:812.6px">Actions</div>
<div class="a" style="left:102px;top:847.5px;width:1536px;height:46.5px;background:#fff;border-bottom:1px solid #e2e4e8"></div>
<div class="a cb" style="left:117.3px;top:853.7px"></div>
<div class="a nw cell name" style="left:153.3px;top:854.2px">Jessica Wilson</div>
<div class="a nw sub" style="left:153.3px;top:874.1px">Chèque</div>
<div class="a nw cell name" style="left:350px;top:854.2px">Deborah Wilson</div>
<div class="a nw cell" style="left:546px;top:854.2px;color:#222">Coccinelles</div>
<div class="a nw cell num" style="left:705.5px;top:854.2px;font-weight:bold;color:#111">0,00$</div>
<div class="a nw cell num" style="left:901.7px;top:854.2px;color:#262626">196,35$</div>
<div class="a nw cell num" style="left:1098.5px;top:854.2px;color:#262626">0,00$</div>
<div class="a nw cell num" style="left:1295.0px;top:854.2px;font-weight:bold;color:#b7321f">196,35$</div>
<div class="a nw act" style="left:1544px;top:859.1px">Actions</div>
<div class="a" style="left:102px;top:894.0px;width:1536px;height:46.5px;background:#f2f2f2;border-bottom:1px solid #e2e4e8"></div>
<div class="a cb" style="left:117.3px;top:900.2px"></div>
<div class="a nw cell name" style="left:153.3px;top:900.7px">Marie Guille</div>
<div class="a nw sub" style="left:153.3px;top:920.6px">Carte débit</div>
<div class="a nw cell name" style="left:350px;top:900.7px">Jennifer Walker</div>
<div class="a nw cell" style="left:546px;top:900.7px;color:#222">Coccinelles</div>
<div class="a nw cell num" style="left:705.5px;top:900.7px;font-weight:bold;color:#111">0,00$</div>
<div class="a nw cell num" style="left:901.7px;top:900.7px;color:#262626">196,35$</div>
<div class="a nw cell num" style="left:1098.5px;top:900.7px;color:#262626">0,00$</div>
<div class="a nw cell num" style="left:1295.0px;top:900.7px;font-weight:bold;color:#b7321f">196,35$</div>
<div class="a nw act" style="left:1544px;top:905.6px">Actions</div>
<svg class="a" style="left:1580px;top:330px" width="30" height="620" viewBox="1580 330 30 620"><path d="M1588.8 351.0H1595.2L1592 354.4Z" fill="#2e3a78"/><path d="M1588.8 397.5H1595.2L1592 400.9Z" fill="#2e3a78"/><path d="M1588.8 444.0H1595.2L1592 447.4Z" fill="#2e3a78"/><path d="M1588.8 490.5H1595.2L1592 493.9Z" fill="#2e3a78"/><path d="M1588.8 537.0H1595.2L1592 540.4Z" fill="#2e3a78"/><path d="M1588.8 583.5H1595.2L1592 586.9Z" fill="#2e3a78"/><path d="M1588.8 630.0H1595.2L1592 633.4Z" fill="#2e3a78"/><path d="M1588.8 676.5H1595.2L1592 679.9Z" fill="#2e3a78"/><path d="M1588.8 723.0H1595.2L1592 726.4Z" fill="#2e3a78"/><path d="M1588.8 769.5H1595.2L1592 772.9Z" fill="#2e3a78"/><path d="M1588.8 816.0H1595.2L1592 819.4Z" fill="#2e3a78"/><path d="M1588.8 862.5H1595.2L1592 865.9Z" fill="#2e3a78"/><path d="M1588.8 909.0H1595.2L1592 912.4Z" fill="#2e3a78"/></svg>
<div class="a" style="left:1638px;top:302px;width:10px;height:645px;background:#f1f2f6"></div>
<div class="a" style="left:1640px;top:315px;width:6px;height:377px;border-radius:3px;background:#adb3bb"></div>
<svg class="a" style="left:1636px;top:300px" width="14" height="650" viewBox="1636 300 14 650"><path d="M1639.8 310.5H1645.8L1642.8 306.5Z" fill="#a4a7ad"/><path d="M1639.8 940.5H1645.8L1642.8 944.5Z" fill="#a4a7ad"/></svg>
<div class="a nw" style="left:102px;top:973px;font-size:14px;color:#222;letter-spacing:-0.1px">Affichage de 1 - 22 sur 22</div>
</body></html>
